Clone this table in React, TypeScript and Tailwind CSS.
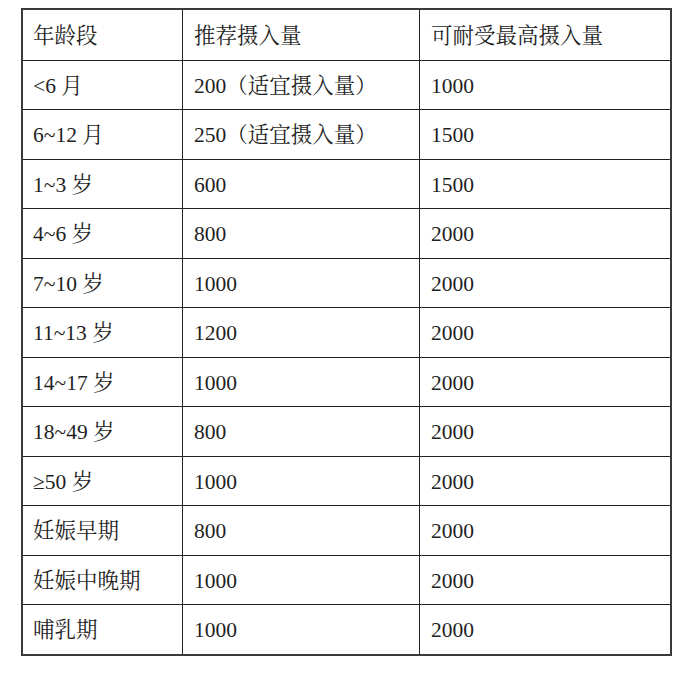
const rows: [string, string, string][] = [
  ['年龄段', '推荐摄入量', '可耐受最高摄入量'],
  ['<6 月', '200（适宜摄入量）', '1000'],
  ['6~12 月', '250（适宜摄入量）', '1500'],
  ['1~3 岁', '600', '1500'],
  ['4~6 岁', '800', '2000'],
  ['7~10 岁', '1000', '2000'],
  ['11~13 岁', '1200', '2000'],
  ['14~17 岁', '1000', '2000'],
  ['18~49 岁', '800', '2000'],
  ['≥50 岁', '1000', '2000'],
  ['妊娠早期', '800', '2000'],
  ['妊娠中晚期', '1000', '2000'],
  ['哺乳期', '1000', '2000'],
];

export default function App() {
  return (
    <div className="w-[700px] h-[680px] bg-white pt-[8px] pl-[21px] text-[21.5px] text-[#1f1f1f] font-['Liberation_Serif','Noto_Serif_CJK_SC','Noto_Sans_CJK_SC',serif]">
      <div className="w-[651px] border-2 border-[#3a3a3a]">
        {rows.map((r, i) => (
          <div
            key={i}
            className={`grid grid-cols-[160px_237px_1fr] h-[49.5px] ${i > 0 ? 'border-t border-[#222]' : ''}`}
          >
            <div className="flex items-center pl-[10px] pt-[2px] border-r border-[#222] whitespace-nowrap">{r[0]}</div>
            <div className="flex items-center pl-[11px] pt-[2px] border-r border-[#222] whitespace-nowrap">{r[1]}</div>
            <div className="flex items-center pl-[11px] pt-[2px] whitespace-nowrap">{r[2]}</div>
          </div>
        ))}
      </div>
    </div>
  );
}
